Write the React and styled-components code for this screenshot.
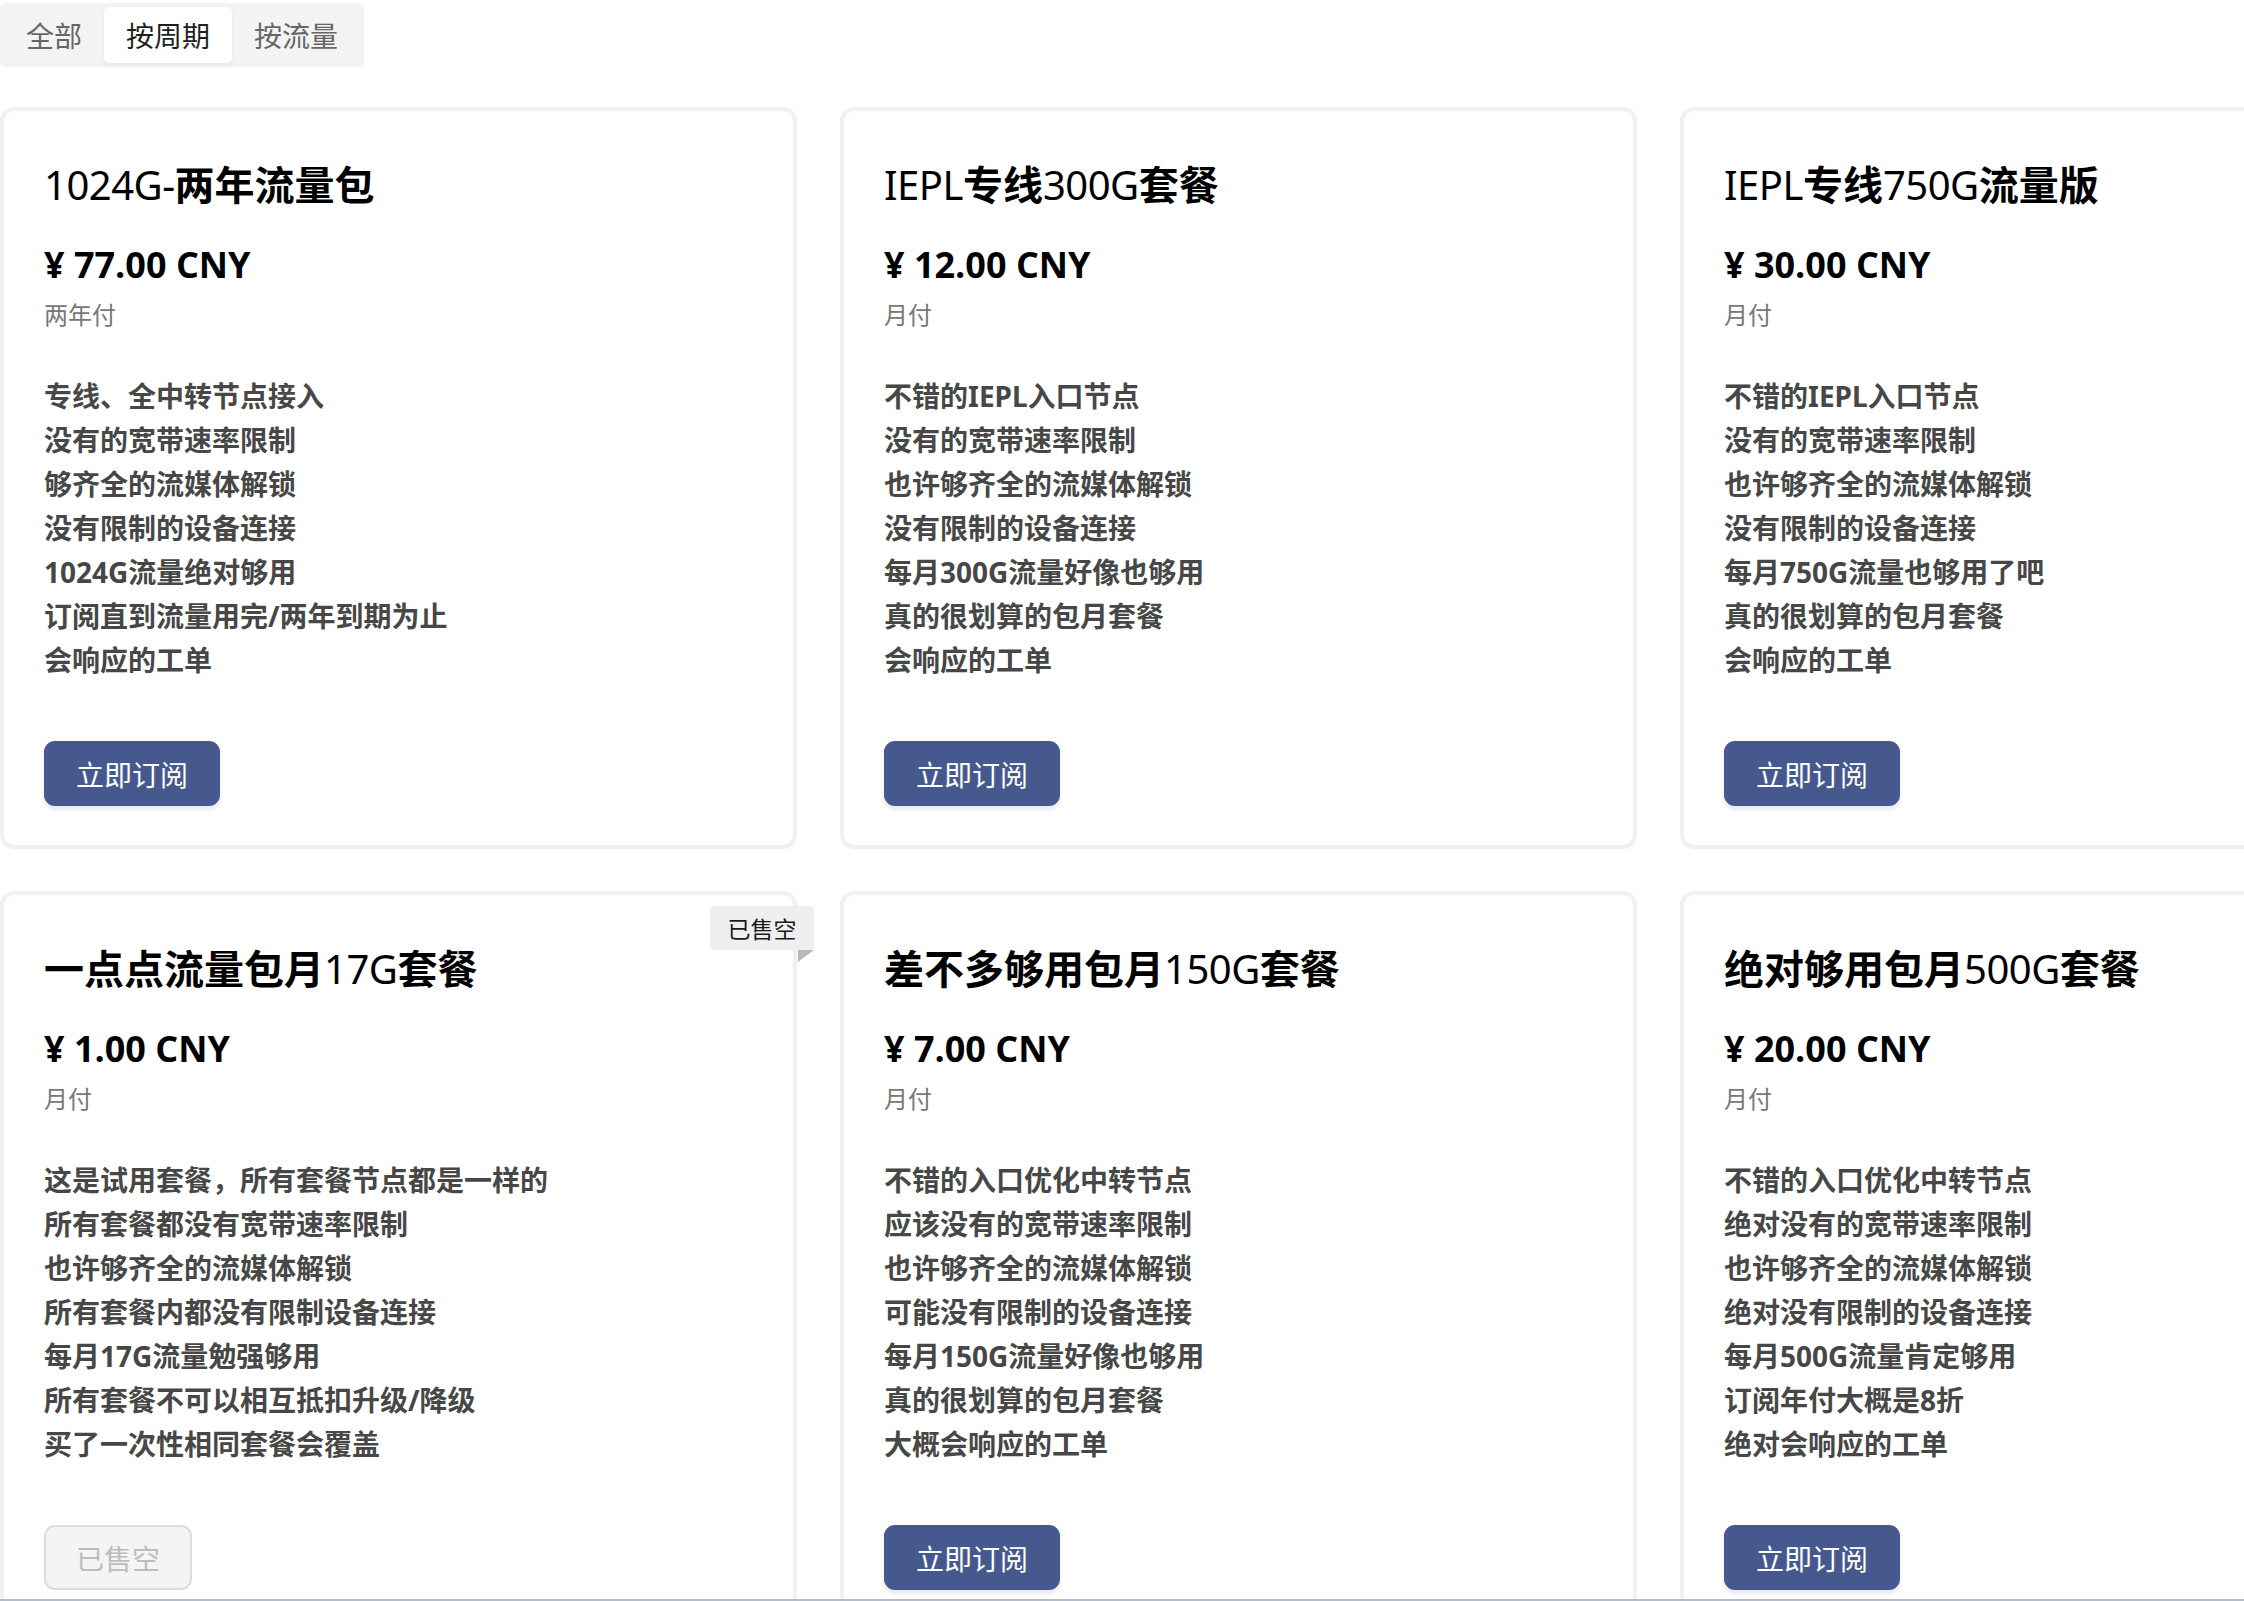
import React, { useState } from "react";
import styled, { createGlobalStyle } from "styled-components";

const GlobalStyle = createGlobalStyle`
  html, body {
    margin: 0;
    padding: 0;
    overflow: hidden;
    background: #fff;
  }
  body {
    font-family: "Noto Sans", "Noto Sans CJK SC", sans-serif;
    color: #222;
  }
`;

const plans = [
  {
    name: "1024G-两年流量包",
    price: "77.00",
    period: "两年付",
    features: [
      "专线、全中转节点接入",
      "没有的宽带速率限制",
      "够齐全的流媒体解锁",
      "没有限制的设备连接",
      "1024G流量绝对够用",
      "订阅直到流量用完/两年到期为止",
      "会响应的工单",
    ],
  },
  {
    name: "IEPL专线300G套餐",
    price: "12.00",
    period: "月付",
    features: [
      "不错的IEPL入口节点",
      "没有的宽带速率限制",
      "也许够齐全的流媒体解锁",
      "没有限制的设备连接",
      "每月300G流量好像也够用",
      "真的很划算的包月套餐",
      "会响应的工单",
    ],
  },
  {
    name: "IEPL专线750G流量版",
    price: "30.00",
    period: "月付",
    features: [
      "不错的IEPL入口节点",
      "没有的宽带速率限制",
      "也许够齐全的流媒体解锁",
      "没有限制的设备连接",
      "每月750G流量也够用了吧",
      "真的很划算的包月套餐",
      "会响应的工单",
    ],
  },
  {
    name: "一点点流量包月17G套餐",
    price: "1.00",
    period: "月付",
    soldOut: true,
    features: [
      "这是试用套餐，所有套餐节点都是一样的",
      "所有套餐都没有宽带速率限制",
      "也许够齐全的流媒体解锁",
      "所有套餐内都没有限制设备连接",
      "每月17G流量勉强够用",
      "所有套餐不可以相互抵扣升级/降级",
      "买了一次性相同套餐会覆盖",
    ],
  },
  {
    name: "差不多够用包月150G套餐",
    price: "7.00",
    period: "月付",
    features: [
      "不错的入口优化中转节点",
      "应该没有的宽带速率限制",
      "也许够齐全的流媒体解锁",
      "可能没有限制的设备连接",
      "每月150G流量好像也够用",
      "真的很划算的包月套餐",
      "大概会响应的工单",
    ],
  },
  {
    name: "绝对够用包月500G套餐",
    price: "20.00",
    period: "月付",
    features: [
      "不错的入口优化中转节点",
      "绝对没有的宽带速率限制",
      "也许够齐全的流媒体解锁",
      "绝对没有限制的设备连接",
      "每月500G流量肯定够用",
      "订阅年付大概是8折",
      "绝对会响应的工单",
    ],
  },
];

const tabs = ["全部", "按周期", "按流量"];

// latin bits of the plan name render in the regular face
const splitName = (name) =>
  name.split(/([\x00-\x7F]+)/).filter(Boolean).map((part, i) =>
    /^[\x00-\x7F]+$/.test(part) ? <Latin key={i}>{part}</Latin> : <span key={i}>{part}</span>
  );

const App = () => {
  const [active, setActive] = useState(1);

  return (
    <>
      <GlobalStyle />
      <Page>
        <TabBar>
          {tabs.map((t, i) => (
            <Tab key={t} $active={i === active} onClick={() => setActive(i)}>
              {t}
            </Tab>
          ))}
        </TabBar>

        <Grid>
          {plans.map((p) => (
            <Card key={p.name}>
              {p.soldOut && <Ribbon>已售空</Ribbon>}
              <Title>{splitName(p.name)}</Title>
              <Price>¥ {p.price} CNY</Price>
              <Period>{p.period}</Period>
              <Features>
                {p.features.map((f) => (
                  <li key={f}>{f}</li>
                ))}
              </Features>
              <Button disabled={p.soldOut}>{p.soldOut ? "已售空" : "立即订阅"}</Button>
            </Card>
          ))}
        </Grid>
      </Page>
      <BottomEdge />
    </>
  );
};

const Page = styled.div`
  padding-top: 3px;
  width: 2480px;
`;

const TabBar = styled.div`
  display: inline-flex;
  align-items: center;
  padding: 4px;
  background: #f3f3f3;
  border-radius: 6px;
`;

const Tab = styled.div`
  height: 56px;
  padding: 0 22px;
  display: flex;
  align-items: center;
  font-family: "Noto Sans CJK SC", sans-serif;
  font-size: 28px;
  color: ${(p) => (p.$active ? "#1f1f1f" : "#666")};
  background: ${(p) => (p.$active ? "#fff" : "transparent")};
  border-radius: 5px;
  box-shadow: ${(p) => (p.$active ? "0 2px 4px rgba(0,0,0,0.06)" : "none")};
  cursor: pointer;
`;

const Grid = styled.div`
  margin-top: 40px;
  display: grid;
  grid-template-columns: repeat(3, 797px);
  column-gap: 43px;
  row-gap: 42px;
`;

const Card = styled.div`
  position: relative;
  box-sizing: border-box;
  display: flex;
  flex-direction: column;
  align-items: flex-start;
  padding: 46px 40px 39px;
  border: 4px solid #f0f0f0;
  border-radius: 14px;
  background: #fff;
`;

const Ribbon = styled.div`
  position: absolute;
  top: 11px;
  right: -21px;
  width: 104px;
  height: 44px;
  display: flex;
  align-items: center;
  justify-content: center;
  background: #efefef;
  border-radius: 4px 4px 0 4px;
  font-family: "Noto Sans CJK SC", sans-serif;
  font-size: 23px;
  color: #1a1a1a;

  &::after {
    content: "";
    position: absolute;
    right: 0;
    top: 44px;
    border-top: 12px solid #b9b9b9;
    border-right: 16px solid transparent;
  }
`;

const Title = styled.h3`
  margin: 0;
  font-family: "Noto Sans", "Noto Sans CJK SC", sans-serif;
  font-size: 40px;
  line-height: 56px;
  font-weight: 700;
  color: #000;
`;

const Latin = styled.span`
  font-weight: 400;
  letter-spacing: -0.5px;
`;

const Price = styled.div`
  margin-top: 27px;
  font-family: "Open Sans", "Noto Sans CJK SC", sans-serif;
  font-size: 36px;
  line-height: 50px;
  font-weight: 700;
  color: #000;
`;

const Period = styled.div`
  margin-top: 7px;
  font-family: "Noto Sans CJK SC", sans-serif;
  font-size: 24px;
  line-height: 34px;
  color: #777;
`;

const Features = styled.ul`
  list-style: none;
  margin: 43px 0 59px;
  padding: 0;

  li {
    font-family: "Noto Sans", "Noto Sans CJK SC", sans-serif;
    font-size: 28px;
    line-height: 44px;
    font-weight: 700;
    color: #474747;
  }
`;

const Button = styled.button`
  margin-top: auto;
  height: 65px;
  padding: 0 30px;
  font-family: "Noto Sans CJK SC", sans-serif;
  font-size: 28px;
  border-radius: 11px;
  border: 2px solid ${(p) => (p.disabled ? "#dcdcdc" : "#46598f")};
  background: ${(p) => (p.disabled ? "#f4f4f4" : "#46598f")};
  color: ${(p) => (p.disabled ? "#bdbdbd" : "#fff")};
  box-shadow: ${(p) => (p.disabled ? "none" : "0 4px 4px rgba(70, 89, 143, 0.12)")};
  cursor: ${(p) => (p.disabled ? "not-allowed" : "pointer")};
`;

const BottomEdge = styled.div`
  position: fixed;
  left: 0;
  right: 0;
  bottom: 0;
  height: 2px;
  background: #b3bccb;
`;

export default App;
